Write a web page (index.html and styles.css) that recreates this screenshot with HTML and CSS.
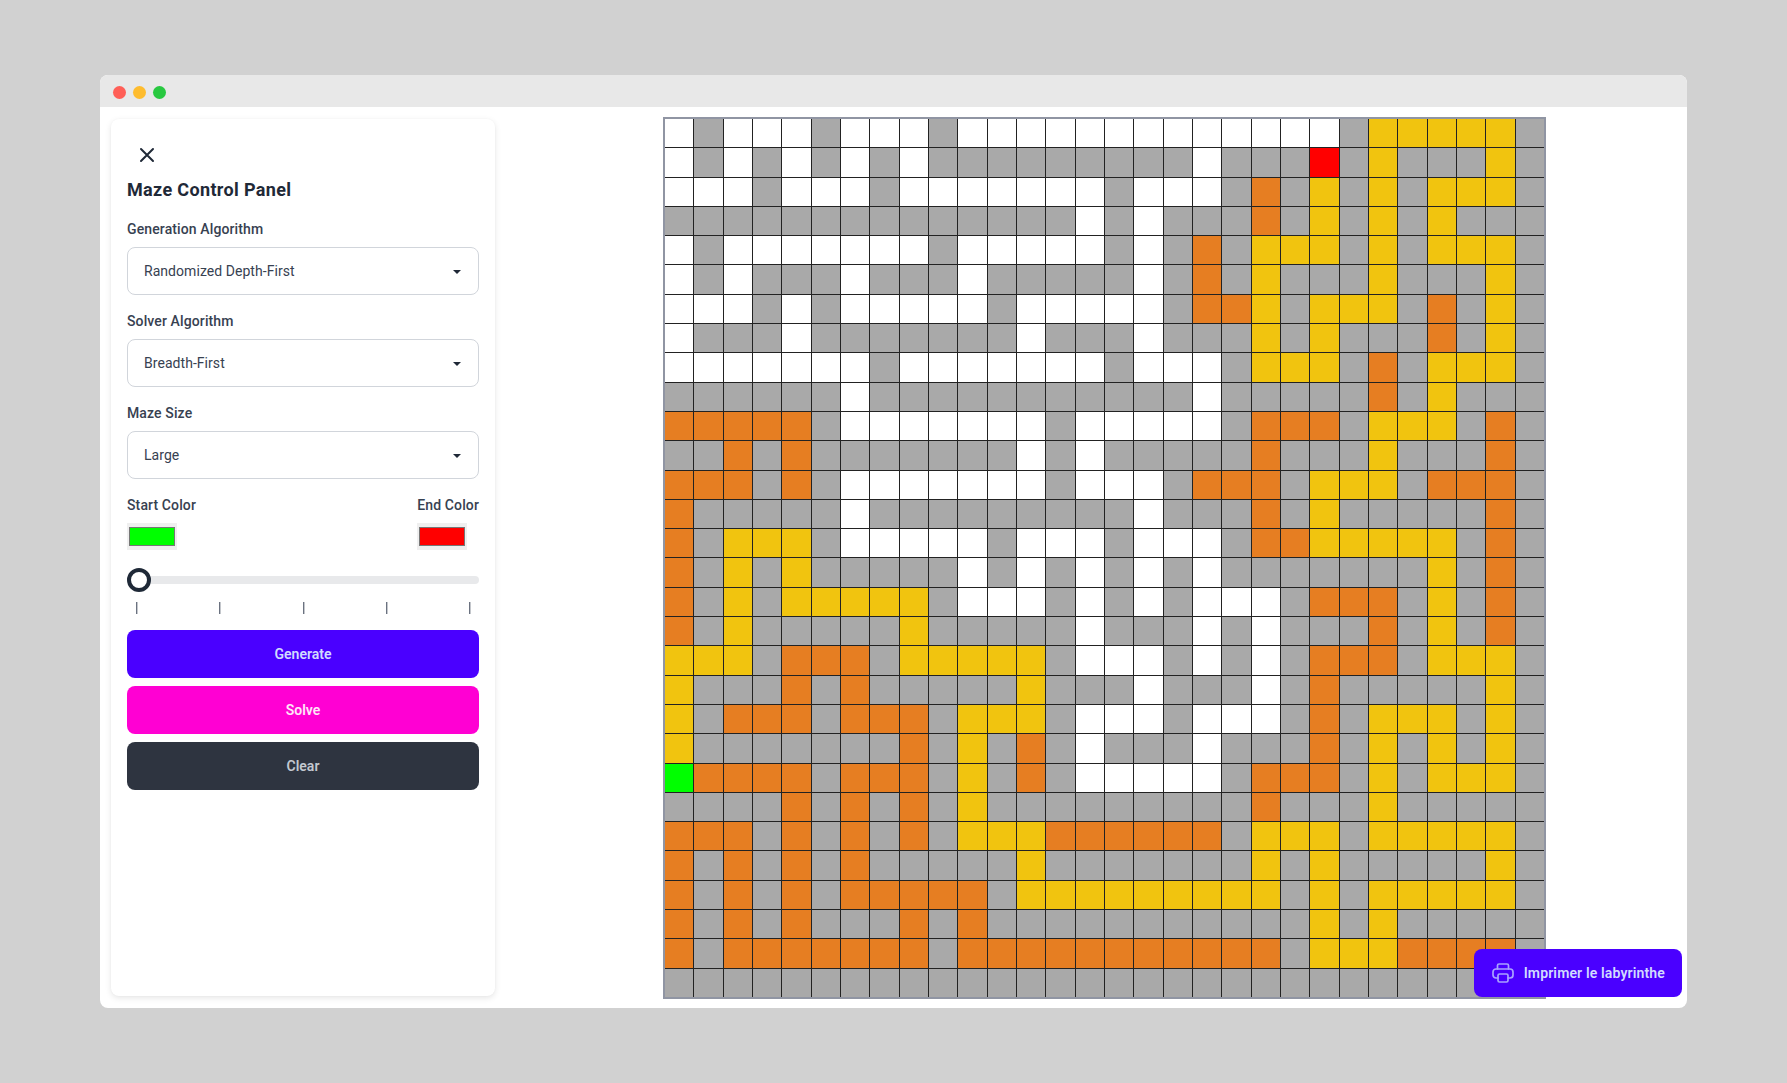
FILE: index.html
```html
<!doctype html>
<html lang="en">
  <head>
    <meta charset="UTF-8" />
    <meta name="viewport" content="width=device-width, initial-scale=1.0" />
    <title>Maze Control Panel</title>
    <link rel="stylesheet" href="styles.css">
  </head>
  <body>
    <div class="app-window">
      <header class="title-bar">
        <span class="dot dot-red"></span>
        <span class="dot dot-yellow"></span>
        <span class="dot dot-green"></span>
      </header>

      <main class="window-body">
        <aside class="control-panel">
          <button type="button" class="close-button" aria-label="Close">
            <svg width="24" height="24" viewBox="0 0 24 24" fill="none" stroke="currentColor" stroke-width="2" stroke-linecap="round" stroke-linejoin="round">
              <path d="M6 18L18 6M6 6l12 12" />
            </svg>
          </button>
          <h1 class="panel-title">Maze Control Panel</h1>

          <div class="form-group">
            <label class="form-label" for="genSelect">Generation Algorithm</label>
            <div class="select-wrap">
              <select id="genSelect" class="form-select">
                <option>Randomized Depth-First</option>
                <option>Prim</option>
                <option>Kruskal</option>
              </select>
            </div>
          </div>

          <div class="form-group">
            <label class="form-label" for="solveSelect">Solver Algorithm</label>
            <div class="select-wrap">
              <select id="solveSelect" class="form-select">
                <option>Breadth-First</option>
                <option>Depth-First</option>
                <option>A*</option>
              </select>
            </div>
          </div>

          <div class="form-group">
            <label class="form-label" for="sizeSelect">Maze Size</label>
            <div class="select-wrap">
              <select id="sizeSelect" class="form-select">
                <option>Large</option>
                <option>Medium</option>
                <option>Small</option>
              </select>
            </div>
          </div>

          <div class="color-row">
            <div class="color-group">
              <label class="form-label" for="startColor">Start Color</label>
              <input id="startColor" class="color-input" type="color" value="#00ff00" />
            </div>
            <div class="color-group">
              <label class="form-label" for="endColor">End Color</label>
              <input id="endColor" class="color-input" type="color" value="#ff0000" />
            </div>
          </div>

          <input class="speed-range" type="range" min="0" max="100" value="0" step="25" aria-label="Speed" />
          <div class="range-ticks">
            <span></span><span></span><span></span><span></span><span></span>
          </div>

          <button type="button" class="action-button btn-generate">Generate</button>
          <button type="button" class="action-button btn-solve">Solve</button>
          <button type="button" class="action-button btn-clear">Clear</button>
        </aside>

        <section class="maze-area">
          <div class="maze-grid" id="mazeGrid"></div>
        </section>
      </main>

      <button type="button" class="print-button">
        <svg class="print-icon" width="24" height="24" viewBox="0 0 24 24" fill="none" stroke="currentColor" stroke-width="1.7" stroke-linecap="round" stroke-linejoin="round">
          <path d="M6.5 8V4.5A1.5 1.5 0 0 1 8 3h8a1.5 1.5 0 0 1 1.5 1.5V8" />
          <path d="M7 17H5a3 3 0 0 1-3-3v-3a3 3 0 0 1 3-3h14a3 3 0 0 1 3 3v3a3 3 0 0 1-3 3h-2" />
          <rect x="7" y="13" width="10" height="8" rx="1.5" />
        </svg>
        Imprimer le labyrinthe
      </button>
    </div>

    <script src="script.js"></script>
  </body>
</html>
```

FILE: styles.css
```css
* {
  margin: 0;
  padding: 0;
  box-sizing: border-box;
}

html,
body {
  height: 100%;
  overflow: hidden;
}

body {
  background: #d1d1d1;
  padding: 75px 100px;
  font-family: "Roboto", sans-serif;
  color: #1f2937;
}

.app-window {
  position: relative;
  display: flex;
  flex-direction: column;
  height: 933px;
  border-radius: 8px;
  overflow: hidden;
  background: #fff;
}

.title-bar {
  display: flex;
  align-items: center;
  gap: 7px;
  height: 32px;
  padding: 2px 0 0 13px;
  background: #e8e8e8;
}

.dot {
  width: 13px;
  height: 13px;
  border-radius: 50%;
}

.dot-red {
  background: #ff5f57;
}

.dot-yellow {
  background: #febc2e;
}

.dot-green {
  background: #28c840;
}

.window-body {
  flex: 1;
  display: flex;
  min-height: 0;
}

/* left panel */
.control-panel {
  width: 384px;
  margin: 12px 0 12px 11px;
  padding: 16px;
  border-radius: 8px;
  background: #fff;
  box-shadow: 0 2px 6px rgba(0, 0, 0, 0.1), 0 0 2px rgba(0, 0, 0, 0.03);
}

.close-button {
  display: flex;
  align-items: center;
  justify-content: center;
  width: 40px;
  height: 40px;
  border: none;
  background: none;
  color: #1f2937;
}

.panel-title {
  padding-top: 1px;
  font-size: 18px;
  line-height: 28px;
  font-weight: 700;
  letter-spacing: 0.35px;
  margin-bottom: 15px;
}

.form-group {
  margin-bottom: 16px;
}

.form-label {
  display: block;
  font-size: 14px;
  line-height: 20px;
  font-weight: 500;
  letter-spacing: 0.12px;
  color: #374151;
  margin-bottom: 8px;
}

.select-wrap {
  position: relative;
}

.select-wrap::after {
  content: "";
  position: absolute;
  right: 18px;
  top: 23px;
  border-left: 4px solid transparent;
  border-right: 4px solid transparent;
  border-top: 4px solid #1f2937;
}

.form-select {
  display: block;
  width: 100%;
  height: 48px;
  padding: 0 16px;
  appearance: none;
  border: 1px solid #d1d5db;
  border-radius: 8px;
  background: #fff;
  font-family: "Roboto", sans-serif;
  font-size: 14px;
  letter-spacing: 0.05px;
  color: #374151;
}

.color-row {
  display: flex;
  justify-content: space-between;
}

.color-group {
  display: flex;
  flex-direction: column;
}

.color-input {
  width: 50px;
  height: 27px;
  padding: 4px 2px;
  border: none;
  background: #efefef;
}

.color-input::-webkit-color-swatch-wrapper {
  padding: 0;
}

.color-input::-webkit-color-swatch {
  border: 1px solid #767676;
  border-radius: 0;
}

.speed-range {
  display: block;
  width: 100%;
  height: 24px;
  margin-top: 18px;
  appearance: none;
  background: transparent;
}

.speed-range::-webkit-slider-runnable-track {
  height: 8px;
  border-radius: 4px;
  background: #e8e9eb;
}

.speed-range::-webkit-slider-thumb {
  appearance: none;
  width: 24px;
  height: 24px;
  margin-top: -8px;
  border: 4px solid #1f2937;
  border-radius: 50%;
  background: #fff;
}

.range-ticks {
  display: flex;
  justify-content: space-between;
  padding: 0 8px 0 9px;
  margin: 10px 0 16px;
}

.range-ticks span {
  width: 2px;
  height: 12px;
  background: #6b7280;
  border-right: 1px solid #c4c7cc;
}

.action-button {
  display: block;
  width: 100%;
  height: 48px;
  margin-bottom: 8px;
  border: none;
  border-radius: 8px;
  font-family: "Roboto", sans-serif;
  font-size: 14px;
  font-weight: 600;
}

.btn-generate {
  background: #4a00ff;
  color: #d1dbff;
}

.btn-solve {
  background: #ff00d3;
  color: #ffe4f8;
}

.btn-clear {
  background: #2e3440;
  color: #c3c8d0;
}

/* maze */
.maze-area {
  flex: 1;
  display: flex;
  align-items: center;
  justify-content: center;
  padding-left: 27px;
}

.maze-grid {
  display: grid;
  grid-template-columns: repeat(30, 1fr);
  grid-template-rows: repeat(30, 1fr);
  gap: 1px;
  width: 883px;
  height: 882px;
  margin-top: 1px;
  border: 2px solid #9095a3;
  background: #222;
}

.cell-wall {
  background: #a9a9a9;
}

.cell-open {
  background: #fff;
}

.cell-visited {
  background: #e67e22;
}

.cell-path {
  background: #f1c40f;
}

.cell-start {
  background: #0f0;
}

.cell-end {
  background: #f00;
}

.print-button {
  position: absolute;
  right: 5px;
  bottom: 11px;
  display: flex;
  align-items: center;
  gap: 9px;
  height: 48px;
  padding: 0 17px;
  border: none;
  border-radius: 8px;
  background: #4a00ff;
  color: #d1dbff;
  font-family: "Roboto", sans-serif;
  font-size: 14px;
  font-weight: 600;
  letter-spacing: 0.15px;
}

.print-icon {
  color: #a9a3ff;
}
```

FILE: script.js
```js
// # wall, . open, o visited, y path, S start, E end
const MAZE_ROWS = [
  ".#...#...#.............#yyyyy#",
  ".#.#.#.#.#########.###E#y###y#",
  "...#...#.......#...#o#y#y#yyy#",
  "##############.#.###o#y#y#y###",
  ".#.......#.....#.#o#yyy#y#yyy#",
  ".#.###.###.#####.#o#y###y###y#",
  "...#.#.....#.....#ooy#yyy#o#y#",
  ".###.#######.###.###y#y###o#y#",
  ".......#.......#...#yyy#o#yyy#",
  "######.###########.#####o#y###",
  "ooooo#.......#.....#ooo#yyy#o#",
  "##o#o#######.#.#####o###y###o#",
  "ooo#o#.......#...#ooo#yyy#ooo#",
  "o#####.#########.###o#y#####o#",
  "o#yyy#.....#...#...#ooyyyyy#o#",
  "o#y#y#####.#.#.#.#.#######y#o#",
  "o#y#yyyyy#...#.#.#...#ooo#y#o#",
  "o#y#####y#####.###.#.###o#y#o#",
  "yyy#ooo#yyyyy#...#.#.#ooo#yyy#",
  "y###o#o#####y###.###.#o#####y#",
  "y#ooo#ooo#yyy#...#...#o#yyy#y#",
  "y#######o#y#o#.###.###o#y#y#y#",
  "Soooo#ooo#y#o#.....#ooo#y#yyy#",
  "####o#o#o#y#########o###y#####",
  "ooo#o#o#o#yyyoooooo#yyy#yyyyy#",
  "o#o#o#o#####y#######y#y#####y#",
  "o#o#o#ooooo#yyyyyyyyy#y#yyyyy#",
  "o#o#o###o#o###########y#y#####",
  "o#ooooooo#ooooooooooo#yyyoooo#",
  "##############################",
];

const CELL_CLASS = {
  "#": "cell-wall",
  ".": "cell-open",
  o: "cell-visited",
  y: "cell-path",
  S: "cell-start",
  E: "cell-end",
};

const grid = document.getElementById("mazeGrid");

MAZE_ROWS.forEach((row) => {
  row.split("").forEach((ch) => {
    const cell = document.createElement("div");
    cell.className = CELL_CLASS[ch];
    grid.appendChild(cell);
  });
});
```
